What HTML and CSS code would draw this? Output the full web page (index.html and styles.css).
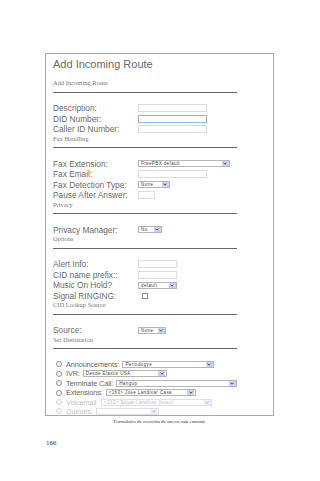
FILE: index.html
```html
<!DOCTYPE html>
<html lang="es">
    <head>
        <meta charset="UTF-8">
        <meta name="viewport" content="width=device-width, initial-scale=1.0">
        <title>Add Incoming Route</title>
        <link rel="stylesheet" href="styles.css">
    </head>
    <body>
        <div class="page">
            <div class="shot">
                <h1 class="title">Add Incoming Route</h1>
                <div class="sec-head first">Add Incoming Route</div>
                <div class="rule"></div>
                <div class="rows">
                    <div class="row"><span class="lbl">Description:</span><span class="inp"></span></div>
                    <div class="row"><span class="lbl">DID Number:</span><span class="inp focus"></span></div>
                    <div class="row"><span class="lbl">Caller ID Number:</span><span class="inp"></span></div>
                </div>

                <div class="sec-head">Fax Handling</div>
                <div class="rule"></div>
                <div class="rows">
                    <div class="row"><span class="lbl">Fax Extension:</span>
                        <span class="sel w92"><span class="val">FreePBX default</span><span class="arr"><svg width="4" height="3" viewBox="0 0 4 3"><polyline points="0.5,0.6 2,2.2 3.5,0.6"/></svg></span></span>
                    </div>
                    <div class="row"><span class="lbl">Fax Email:</span><span class="inp"></span></div>
                    <div class="row"><span class="lbl">Fax Detection Type:</span>
                        <span class="sel w32"><span class="val">None</span><span class="arr"><svg width="4" height="3" viewBox="0 0 4 3"><polyline points="0.5,0.6 2,2.2 3.5,0.6"/></svg></span></span>
                    </div>
                    <div class="row"><span class="lbl">Pause After Answer:</span><span class="inp tiny"></span></div>
                </div>

                <div class="sec-head">Privacy</div>
                <div class="rule"></div>
                <div class="rows">
                    <div class="row"><span class="lbl">Privacy Manager:</span>
                        <span class="sel w24"><span class="val">No</span><span class="arr"><svg width="4" height="3" viewBox="0 0 4 3"><polyline points="0.5,0.6 2,2.2 3.5,0.6"/></svg></span></span>
                    </div>
                </div>

                <div class="sec-head">Options</div>
                <div class="rule"></div>
                <div class="rows">
                    <div class="row"><span class="lbl">Alert Info:</span><span class="inp short"></span></div>
                    <div class="row"><span class="lbl">CID name prefix::</span><span class="inp short"></span></div>
                    <div class="row"><span class="lbl">Music On Hold?</span>
                        <span class="sel w39"><span class="val">default</span><span class="arr"><svg width="4" height="3" viewBox="0 0 4 3"><polyline points="0.5,0.6 2,2.2 3.5,0.6"/></svg></span></span>
                    </div>
                    <div class="row"><span class="lbl">Signal RINGING:</span><span class="check"></span></div>
                </div>

                <div class="sec-head">CID Lookup Source</div>
                <div class="rule"></div>
                <div class="rows">
                    <div class="row"><span class="lbl">Source:</span>
                        <span class="sel w28"><span class="val">None</span><span class="arr"><svg width="4" height="3" viewBox="0 0 4 3"><polyline points="0.5,0.6 2,2.2 3.5,0.6"/></svg></span></span>
                    </div>
                </div>

                <div class="sec-head">Set Destination</div>
                <div class="rule"></div>
                <div class="dest">
                    <div class="drow"><span class="radio"></span><span class="dlbl">Announcements:</span>
                        <span class="sel d92"><span class="val">Periodogye</span><span class="arr"><svg width="4" height="3" viewBox="0 0 4 3"><polyline points="0.5,0.6 2,2.2 3.5,0.6"/></svg></span></span>
                    </div>
                    <div class="drow"><span class="radio"></span><span class="dlbl">IVR:</span>
                        <span class="sel d84"><span class="val">Desde Elastix USA</span><span class="arr"><svg width="4" height="3" viewBox="0 0 4 3"><polyline points="0.5,0.6 2,2.2 3.5,0.6"/></svg></span></span>
                    </div>
                    <div class="drow"><span class="radio"></span><span class="dlbl">Terminate Call:</span>
                        <span class="sel d121"><span class="val">Hangup</span><span class="arr"><svg width="4" height="3" viewBox="0 0 4 3"><polyline points="0.5,0.6 2,2.2 3.5,0.6"/></svg></span></span>
                    </div>
                    <div class="drow"><span class="radio"></span><span class="dlbl">Extensions:</span>
                        <span class="sel d90"><span class="val">&lt;163&gt; Jose Landivar Casa</span><span class="arr"><svg width="4" height="3" viewBox="0 0 4 3"><polyline points="0.5,0.6 2,2.2 3.5,0.6"/></svg></span></span>
                    </div>
                    <div class="drow dim"><span class="radio"></span><span class="dlbl">Voicemail:</span>
                        <span class="sel d111"><span class="val">&lt;212&gt; Edgar Landivar (busy)</span><span class="arr"><svg width="4" height="3" viewBox="0 0 4 3"><polyline points="0.5,0.6 2,2.2 3.5,0.6"/></svg></span></span>
                    </div>
                    <div class="drow dim"><span class="radio"></span><span class="dlbl">Queues:</span>
                        <span class="sel d63"><span class="val"></span><span class="arr"><svg width="4" height="3" viewBox="0 0 4 3"><polyline points="0.5,0.6 2,2.2 3.5,0.6"/></svg></span></span>
                    </div>
                </div>
            </div>
            <p class="caption">Formulario de creación de nueva ruta entrante</p>
            <p class="pagenum">166</p>
        </div>
    </body>
</html>
```

FILE: styles.css
```css
/* Page */
body {
    margin: 0;
    background: #fff;
    font-family: "Liberation Sans", Arial, sans-serif;
}

.page {
    padding: 53px 0 0 45px;
}

/* Screenshot frame */
.shot {
    width: 229px;
    height: 363px;
    box-sizing: border-box;
    border: 1px solid #a9a9a9;
    padding-left: 7px;
    overflow: hidden;
}

.title {
    margin: 3px 0 0;
    font-size: 11px;
    line-height: 14px;
    font-weight: normal;
    color: #6a6a6a;
}

/* Section headings and rules */
.sec-head {
    margin-top: 1px;
    font-family: "Liberation Serif", "Times New Roman", serif;
    font-size: 6.5px;
    line-height: 6px;
    color: #777;
}

.sec-head.first {
    margin-top: 9px;
}

.rule {
    margin-top: 5.5px;
    width: 184px;
    border-top: 1px solid #666;
}

/* Form rows */
.rows {
    margin-top: 10.5px;
}

.row {
    display: flex;
    align-items: center;
    height: 10.5px;
}

.lbl {
    flex: none;
    width: 85px;
    font-size: 8.3px;
    color: #6a6a6a;
    white-space: nowrap;
}

.inp {
    width: 69px;
    height: 8px;
    box-sizing: border-box;
    border: 1px solid #dcdcdc;
    background: #fff;
}

.inp.focus {
    border-color: #8ab8ee;
}

.inp.short {
    width: 39px;
}

.inp.tiny {
    width: 17px;
}

.check {
    margin-left: 4px;
    width: 6px;
    height: 6px;
    box-sizing: border-box;
    border: 1px solid #888;
}

/* Fake dropdowns */
.sel {
    display: flex;
    align-items: center;
    flex: none;
    height: 7px;
    box-sizing: border-box;
    border: 1px solid #b5b5b5;
    background: #fff;
    overflow: hidden;
}

.sel .val {
    flex: 1;
    padding-left: 2px;
    font-size: 4.5px;
    letter-spacing: 0.4px;
    color: #444;
    white-space: nowrap;
    overflow: hidden;
}

.sel .arr {
    display: flex;
    align-items: center;
    justify-content: center;
    width: 7px;
    height: 5px;
    margin-right: 0.5px;
    background: #c9d5ef;
}

.sel svg polyline {
    fill: none;
    stroke: #2c4c9c;
    stroke-width: 1;
}

.w92 { width: 92px; }
.w39 { width: 39px; }
.w32 { width: 32px; }
.w28 { width: 28px; }
.w24 { width: 24px; }

/* Destination radios */
.dest {
    margin-top: 10.8px;
}

.drow {
    display: flex;
    align-items: center;
    height: 9.4px;
    padding-left: 3px;
}

.radio {
    flex: none;
    width: 6px;
    height: 6px;
    box-sizing: border-box;
    border-radius: 50%;
    border: 1px solid #8a96b0;
    background: #f3f5fa;
}

.dlbl {
    margin: 0 3px 0 4px;
    font-size: 7.3px;
    letter-spacing: -0.1px;
    color: #666;
    white-space: nowrap;
}

.drow.dim {
    opacity: 0.4;
}

.d121 { width: 121px; }
.d111 { width: 111px; }
.d92 { width: 92px; }
.d90 { width: 90px; }
.d84 { width: 84px; }
.d63 { width: 63px; }

/* Book caption and page number */
.caption {
    margin: 3px 0 0;
    width: 229px;
    font-family: "Liberation Serif", "Times New Roman", serif;
    font-size: 5px;
    line-height: 6px;
    text-align: center;
    color: #333;
}

.pagenum {
    margin: 14px 0 0 1px;
    font-family: "Liberation Serif", "Times New Roman", serif;
    font-size: 7px;
    line-height: 8px;
    color: #333;
}
```
